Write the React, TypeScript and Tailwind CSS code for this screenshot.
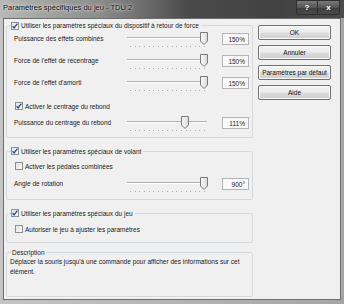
import React from "react";

function Check({ checked }: { checked: boolean }) {
  return (
    <svg width="8" height="8" viewBox="0 0 8 8" className="shrink-0">
      <defs>
        <linearGradient id="cbg" x1="0" y1="0" x2="1" y2="1">
          <stop offset="0" stopColor="#dcdcdc" />
          <stop offset="1" stopColor="#fbfbfb" />
        </linearGradient>
      </defs>
      <rect x="0.5" y="0.5" width="7" height="7" fill="#f4f4f4" stroke="#8e8f8f" />
      <rect x="1.5" y="1.5" width="5" height="5" fill="url(#cbg)" />
      {checked && (
        <path d="M1.6 4.2 L3.1 5.9 L6.4 1.6" fill="none" stroke="#2a4a8f" strokeWidth="1.3" />
      )}
    </svg>
  );
}

function Slider({ thumb }: { thumb: number }) {
  const ticks = [] as number[];
  for (let i = 0; i < 17; i++) ticks.push(5 + i * 4.625);
  return (
    <svg width="86" height="18" viewBox="0 0 86 18" className="shrink-0">
      <defs>
        <linearGradient id="thg" x1="0" y1="0" x2="1" y2="0">
          <stop offset="0" stopColor="#fafafa" />
          <stop offset="1" stopColor="#dadada" />
        </linearGradient>
      </defs>
      <line x1="2" y1="5.5" x2="82" y2="5.5" stroke="#b0b0b0" strokeWidth="1" />
      <line x1="2" y1="6.5" x2="82" y2="6.5" stroke="#ffffff" strokeWidth="1" />
      {ticks.map((t, i) => (
        <rect key={i} x={Math.round(t)} y="14" width="1" height="1" fill="#b0b0b0" />
      ))}
      <path
        d={`M${thumb - 3.5} 0.5 H${thumb + 3.5} V9 L${thumb} 12.5 L${thumb - 3.5} 9 Z`}
        fill="url(#thg)"
        stroke="#7a7a7a"
        strokeWidth="1"
        strokeLinejoin="round"
      />
    </svg>
  );
}

function SliderRow({ label, thumb, value, last }: { label: string; thumb: number; value: string; last?: boolean }) {
  return (
    <div className={`flex items-start ${last ? "h-[21px]" : "h-[22px]"}`}>
      <div className="w-[118px] pl-[7px] mt-[2px] leading-[9px] text-[6.5px] text-[#1a1a1a] whitespace-nowrap">{label}</div>
      <Slider thumb={thumb} />
      <div className="ml-[11px] mt-[1px] w-[27px] h-[12px] border border-[#b4b4b4] bg-[#fafafa] flex items-center justify-end pr-[3px] text-[6.5px] leading-[9px] text-[#1a1a1a]">
        {value}
      </div>
    </div>
  );
}

function CheckLine({ checked, label, className }: { checked: boolean; label: string; className?: string }) {
  return (
    <div className={`flex items-center gap-[2px] h-[9px] leading-[9px] text-[6.5px] text-[#1a1a1a] whitespace-nowrap ${className ?? ""}`}>
      <Check checked={checked} />
      <span>{label}</span>
    </div>
  );
}

function Btn({ label }: { label: string }) {
  return (
    <div className="h-[15px] w-[73px] rounded-[2px] border border-[#707070] bg-[linear-gradient(#f3f3f3_0%,#ebebeb_48%,#dddddd_52%,#cfcfcf_100%)] shadow-[inset_0_0_0_1px_#fcfcfc] flex items-center justify-center text-[6.5px] leading-[9px] text-[#111] whitespace-nowrap">
      {label}
    </div>
  );
}

export default function App() {
  return (
    <div className="w-[344px] h-[304px] overflow-hidden bg-[#8f8f8f] font-['Liberation_Sans',Arial,sans-serif] flex flex-col">
      {/* Title bar */}
      <div className="h-[18px] shrink-0 flex items-start bg-[linear-gradient(90deg,#b8b8b8_0%,#a2a6a0_12%,#8a8a8a_30%,#4a4a4a_55%,#424242_80%,#4c4c4c_100%)]">
        <div className="pl-[3px] pt-[3px] text-[7.5px] leading-[10px] text-[#111] whitespace-nowrap [text-shadow:0_0_4px_#e8e8e8,0_0_2px_#e8e8e8]">
          Paramètres spécifiques du jeu - TDU 2
        </div>
        <div className="ml-auto mr-[4px] flex h-[15px]">
          <div className="w-[22px] h-[15px] border border-[#2e2e2e] rounded-bl-[3px] bg-[linear-gradient(#7a7a7a,#555_50%,#3e3e3e_51%,#4a4a4a)] flex items-center justify-center text-[8px] font-bold text-white leading-none">?</div>
          <div className="w-[22px] h-[15px] border border-l-0 border-[#2e2e2e] rounded-br-[3px] bg-[linear-gradient(#7a7a7a,#555_50%,#3e3e3e_51%,#4a4a4a)] flex items-center justify-center text-[8px] font-bold text-white leading-none">x</div>
        </div>
      </div>
      {/* Frame + content */}
      <div className="flex-1 flex px-[3px] pb-[4px] bg-[linear-gradient(90deg,#c4c4c4,#a5a5a5)]">
        <div className="flex-1 border border-[#6e6e6e] bg-[#f0f0f0] flex">
          {/* left column */}
          <div className="w-[250px] pl-[2px] flex flex-col">
            <fieldset className="mt-[2px] w-[247px] border border-[#d5d9dc] rounded-[2px] pt-[2px]">
              <legend className="ml-[4px] pr-[2px]">
                <CheckLine checked label="Utiliser les paramètres spéciaux du dispositif à retour de force" />
              </legend>
              <SliderRow label="Puissance des effets combinés" thumb={79} value="150%" />
              <SliderRow label="Force de l'effet de recentrage" thumb={79} value="150%" />
              <SliderRow label="Force de l'effet d'amorti" thumb={79} value="150%" />
              <CheckLine checked label="Activer le centrage du rebond" className="ml-[8px] mt-[3.5px]" />
              <div className="mt-[5.5px]">
                <SliderRow label="Puissance du centrage du rebond" thumb={60} value="111%" last />
              </div>
            </fieldset>
            <fieldset className="mt-[8.5px] w-[247px] border border-[#d5d9dc] rounded-[2px]">
              <legend className="ml-[4px] pr-[2px]">
                <CheckLine checked label="Utiliser les paramètres spéciaux de volant" />
              </legend>
              <CheckLine checked={false} label="Activer les pédales combinées" className="ml-[8px] mt-[6px]" />
              <div className="mt-[6.5px]">
                <SliderRow label="Angle de rotation" thumb={79} value="900°" />
              </div>
            </fieldset>
            <fieldset className="mt-[8.5px] w-[247px] border border-[#d5d9dc] rounded-[2px] pb-[8.5px]">
              <legend className="ml-[4px] pr-[2px]">
                <CheckLine checked label="Utiliser les paramètres spéciaux du jeu" />
              </legend>
              <CheckLine checked={false} label="Autoriser le jeu à ajuster les paramètres" className="ml-[8px] mt-[7px]" />
            </fieldset>
            <fieldset className="mt-[5px] w-[247px] h-[49px] border border-[#d5d9dc] rounded-[2px]">
              <legend className="ml-[4px] px-[1px] text-[6.5px] leading-[9px] text-[#1a1a1a]">Description</legend>
              <div className="pl-[3px] text-[6.5px] leading-[10px] text-[#1a1a1a] whitespace-nowrap">
                Déplacer la souris jusqu'à une commande pour afficher des informations sur cet
                <br />
                élément.
              </div>
            </fieldset>
          </div>
          {/* right column buttons */}
          <div className="ml-[4px] mt-[6px] flex flex-col gap-[5px]">
            <Btn label="OK" />
            <Btn label="Annuler" />
            <Btn label="Paramètres par défaut" />
            <Btn label="Aide" />
          </div>
        </div>
      </div>
    </div>
  );
}
